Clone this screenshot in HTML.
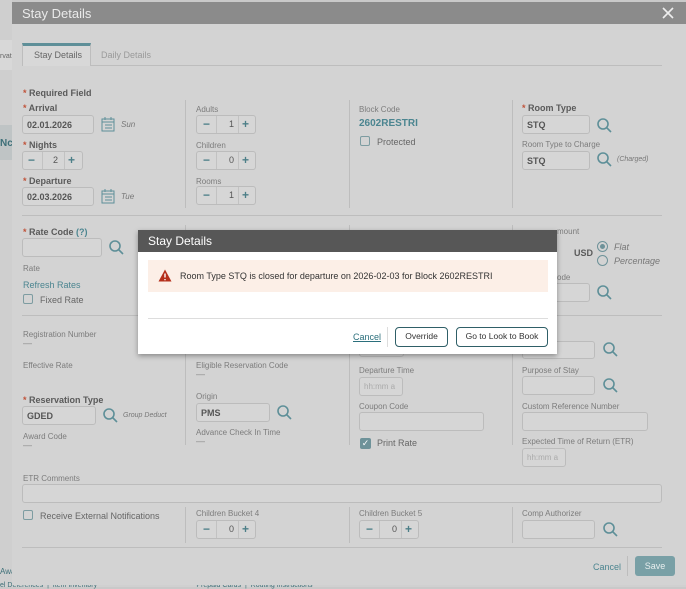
<!DOCTYPE html>
<html><head><meta charset="utf-8"><style>
*{margin:0;padding:0;box-sizing:border-box}
body{width:686px;height:587px;overflow:hidden;background:#c9c9c9;font-family:"Liberation Sans",sans-serif;position:relative;color:#555}
.a{position:absolute;white-space:nowrap}
.l{position:absolute;font-size:8px;color:#7c7c7c;white-space:nowrap}
.b{position:absolute;font-size:9px;color:#5a5a5a;font-weight:bold;white-space:nowrap}
.s{color:#c0533a}
.in{position:absolute;border:1px solid #bcbcbc;background:#d6d6d6;border-radius:3px;height:19px;font-size:9px;font-weight:bold;color:#555;padding:4px 4px}
.sp{position:absolute;height:19px;border:1px solid #bcbcbc;border-radius:3px;background:#d6d6d6;font-size:12px;color:#4d7f88}
.sp span{position:absolute;top:1px;font-weight:bold}
.sp i{position:absolute;top:0;width:1px;height:17px;background:#c2c2c2}
.sp b{position:absolute;top:3px;font-size:9px;color:#555;font-weight:normal}
.hl{position:absolute;height:1px;background:#bdbdbd}
.vl{position:absolute;width:1px;background:#bdbdbd}
.cb{position:absolute;width:10px;height:10px;border:1px solid #7d9ca1;border-radius:2px}
</style></head><body>
<div class="a" style="left:0;top:0;width:12px;height:587px;background:#cfcfcf"></div>
<div class="a" style="left:0;top:40px;width:12px;height:30px;background:#d8d8d8"></div>
<div class="a" style="left:0;top:53px;font-size:7px;color:#666">rvat</div>
<div class="a" style="left:0;top:125px;width:12px;height:35px;background:#bfc4c5"></div>
<div class="a" style="left:0;top:138px;font-size:10px;font-weight:bold;color:#3d6f78">Nc</div>
<div class="a" style="left:0;top:567px;font-size:8px;color:#3d6f78">Awa</div>
<div class="a" style="left:0;top:580px;width:686px;height:7px;background:#d0d0d0"></div>
<div class="a" style="left:0;top:582px;font-size:7px;color:#3d6f78">el Deferences &nbsp;|&nbsp; Item Inventory &nbsp; &nbsp; &nbsp; &nbsp; &nbsp; &nbsp; &nbsp; &nbsp; &nbsp; &nbsp; &nbsp; &nbsp; &nbsp; &nbsp; &nbsp; &nbsp; &nbsp; &nbsp; &nbsp; &nbsp; &nbsp; &nbsp; &nbsp; &nbsp; &nbsp; Prepaid Cards &nbsp;|&nbsp; Routing Instructions</div>
<div class="a" style="left:0;top:2px;width:686px;height:583px"></div>
<div class="a" style="left:12px;top:2px;width:674px;height:583px;background:#d3d3d3"></div>
<div class="a" style="left:12px;top:2px;width:674px;height:22px;background:#8b8b8b"></div>
<div class="a" style="left:22px;top:6px;font-size:13px;color:#eaeaea">Stay Details</div>
<svg class="a" style="left:662px;top:7px" width="12" height="12"><path d="M1 1L11 11M11 1L1 11" stroke="#eee" stroke-width="1.6"/></svg>
<div class="a" style="left:22px;top:43px;width:69px;height:23px;background:#d8d8d8;border-top:3px solid #5e8f98;border-right:1px solid #bdbdbd;border-left:1px solid #bdbdbd"></div>
<div class="a" style="left:34px;top:50px;font-size:9px;color:#666">Stay Details</div>
<div class="a" style="left:101px;top:50px;font-size:9px;color:#9a9a9a">Daily Details</div>
<div class="hl" style="left:91px;top:65px;width:571px"></div>
<div class="b" style="left:23px;top:88px"><span class="s">* </span>Required Field</div>
<div class="b" style="left:23px;top:103px"><span class="s">* </span>Arrival</div>
<div class="in" style="left:22px;top:115px;width:72px">02.01.2026</div>
<svg class="a" style="left:101px;top:117px" width="14" height="15"><rect x="1" y="2" width="12" height="12" fill="none" stroke="#5e8f98"/><path d="M1 5H13M4 8H11M4 11H11M4 0V3M10 0V3" stroke="#5e8f98"/></svg>
<div class="a" style="left:121px;top:120px;font-size:8px;font-style:italic;color:#777">Sun</div>
<div class="b" style="left:23px;top:140px"><span class="s">* </span>Nights</div>
<div class="sp" style="left:22px;top:151px;width:61px"><span style="left:5px">−</span><i style="left:19px"></i><b style="left:30px">2</b><i style="left:41px"></i><span style="left:45px">+</span></div>
<div class="b" style="left:23px;top:176px"><span class="s">* </span>Departure</div>
<div class="in" style="left:22px;top:187px;width:72px">02.03.2026</div>
<svg class="a" style="left:101px;top:189px" width="14" height="15"><rect x="1" y="2" width="12" height="12" fill="none" stroke="#5e8f98"/><path d="M1 5H13M4 8H11M4 11H11M4 0V3M10 0V3" stroke="#5e8f98"/></svg>
<div class="a" style="left:121px;top:192px;font-size:8px;font-style:italic;color:#777">Tue</div>
<div class="vl" style="left:185px;top:100px;height:108px"></div>
<div class="l" style="left:196px;top:105px">Adults</div>
<div class="sp" style="left:196px;top:115px;width:60px"><span style="left:6px">−</span><i style="left:19px"></i><b style="left:32px">1</b><i style="left:41px"></i><span style="left:45px">+</span></div>
<div class="l" style="left:196px;top:141px">Children</div>
<div class="sp" style="left:196px;top:151px;width:60px"><span style="left:6px">−</span><i style="left:19px"></i><b style="left:32px">0</b><i style="left:41px"></i><span style="left:45px">+</span></div>
<div class="l" style="left:196px;top:177px">Rooms</div>
<div class="sp" style="left:196px;top:186px;width:60px"><span style="left:6px">−</span><i style="left:19px"></i><b style="left:32px">1</b><i style="left:41px"></i><span style="left:45px">+</span></div>
<div class="vl" style="left:349px;top:100px;height:108px"></div>
<div class="l" style="left:359px;top:105px">Block Code</div>
<div class="a" style="left:359px;top:118px;font-size:10px;font-weight:bold;color:#4b8590">2602RESTRI</div>
<div class="cb" style="left:360px;top:136px"></div>
<div class="a" style="left:377px;top:137px;font-size:9px;color:#666">Protected</div>
<div class="vl" style="left:512px;top:100px;height:108px"></div>
<div class="b" style="left:522px;top:103px"><span class="s">* </span>Room Type</div>
<div class="in" style="left:522px;top:115px;width:68px">STQ</div>
<div class="l" style="left:522px;top:140px">Room Type to Charge</div>
<div class="in" style="left:522px;top:151px;width:68px">STQ</div>
<div class="a" style="left:617px;top:156px;font-size:7px;font-style:italic;color:#777">(Charged)</div>
<div class="hl" style="left:22px;top:215px;width:640px"></div>
<div class="b" style="left:23px;top:227px"><span class="s">* </span>Rate Code <span style="color:#4b8590">(?)</span></div>
<div class="in" style="left:22px;top:238px;width:80px"></div>
<div class="l" style="left:23px;top:264px">Rate</div>
<div class="a" style="left:23px;top:280px;font-size:9px;color:#4b8590">Refresh Rates</div>
<div class="cb" style="left:23px;top:294px"></div>
<div class="a" style="left:40px;top:295px;font-size:9px;color:#666">Fixed Rate</div>
<div class="vl" style="left:185px;top:225px;height:80px"></div>
<div class="vl" style="left:349px;top:225px;height:80px"></div>
<div class="vl" style="left:512px;top:225px;height:80px"></div>
<div class="l" style="left:557px;top:227px">mount</div>
<div class="b" style="left:574px;top:248px">USD</div>
<div class="a" style="left:597px;top:241px;width:11px;height:11px;border:1px solid #6e9299;border-radius:50%"><div style="position:absolute;left:2px;top:2px;width:5px;height:5px;border-radius:50%;background:#6e9299"></div></div>
<div class="a" style="left:597px;top:255px;width:11px;height:11px;border:1px solid #6e9299;border-radius:50%"></div>
<div class="a" style="left:614px;top:242px;font-size:9px;font-style:italic;color:#777">Flat</div>
<div class="a" style="left:614px;top:256px;font-size:9px;font-style:italic;color:#777">Percentage</div>
<div class="l" style="left:557px;top:273px">ode</div>
<div class="in" style="left:540px;top:283px;width:50px"></div>
<div class="hl" style="left:22px;top:315px;width:640px"></div>
<div class="l" style="left:23px;top:330px">Registration Number</div>
<div class="a" style="left:23px;top:338px;font-size:9px;color:#888">—</div>
<div class="l" style="left:23px;top:361px">Effective Rate</div>
<div class="b" style="left:23px;top:395px"><span class="s">* </span>Reservation Type</div>
<div class="in" style="left:22px;top:406px;width:74px">GDED</div>
<div class="a" style="left:123px;top:412px;font-size:7px;font-style:italic;color:#777">Group Deduct</div>
<div class="l" style="left:23px;top:432px">Award Code</div>
<div class="a" style="left:23px;top:440px;font-size:9px;color:#888">—</div>
<div class="vl" style="left:185px;top:325px;height:120px"></div>
<div class="l" style="left:196px;top:361px">Eligible Reservation Code</div>
<div class="a" style="left:196px;top:369px;font-size:9px;color:#888">—</div>
<div class="l" style="left:196px;top:392px">Origin</div>
<div class="in" style="left:196px;top:403px;width:74px">PMS</div>
<div class="l" style="left:196px;top:428px">Advance Check In Time</div>
<div class="a" style="left:196px;top:436px;font-size:9px;color:#888">—</div>
<div class="vl" style="left:349px;top:325px;height:120px"></div>
<div class="in" style="left:359px;top:341px;width:45px;height:16px"></div>
<div class="l" style="left:359px;top:366px">Departure Time</div>
<div class="in" style="left:359px;top:377px;width:44px;font-weight:normal;color:#aaa;font-size:8px">hh:mm a</div>
<div class="l" style="left:359px;top:402px">Coupon Code</div>
<div class="in" style="left:359px;top:412px;width:125px"></div>
<div class="a" style="left:360px;top:438px;width:11px;height:11px;background:#6e9299;border-radius:2px;color:#fff;font-size:9px;line-height:11px;text-align:center">✓</div>
<div class="a" style="left:377px;top:438px;font-size:9px;color:#666">Print Rate</div>
<div class="vl" style="left:512px;top:325px;height:120px"></div>
<div class="in" style="left:522px;top:341px;width:73px;height:18px"></div>
<div class="l" style="left:522px;top:366px">Purpose of Stay</div>
<div class="in" style="left:522px;top:376px;width:73px"></div>
<div class="l" style="left:522px;top:402px">Custom Reference Number</div>
<div class="in" style="left:522px;top:412px;width:126px"></div>
<div class="l" style="left:522px;top:437px">Expected Time of Return (ETR)</div>
<div class="in" style="left:522px;top:448px;width:44px;font-weight:normal;color:#aaa;font-size:8px">hh:mm a</div>
<div class="l" style="left:23px;top:474px">ETR Comments</div>
<div class="in" style="left:22px;top:484px;width:640px"></div>
<div class="cb" style="left:23px;top:510px"></div>
<div class="a" style="left:40px;top:511px;font-size:9px;color:#666">Receive External Notifications</div>
<div class="vl" style="left:185px;top:507px;height:36px"></div>
<div class="l" style="left:196px;top:509px">Children Bucket 4</div>
<div class="sp" style="left:196px;top:520px;width:60px"><span style="left:6px">−</span><i style="left:19px"></i><b style="left:32px">0</b><i style="left:41px"></i><span style="left:45px">+</span></div>
<div class="vl" style="left:349px;top:507px;height:36px"></div>
<div class="l" style="left:359px;top:509px">Children Bucket 5</div>
<div class="sp" style="left:359px;top:520px;width:60px"><span style="left:6px">−</span><i style="left:19px"></i><b style="left:32px">0</b><i style="left:41px"></i><span style="left:45px">+</span></div>
<div class="vl" style="left:512px;top:507px;height:36px"></div>
<div class="l" style="left:522px;top:509px">Comp Authorizer</div>
<div class="in" style="left:522px;top:520px;width:73px"></div>
<div class="hl" style="left:22px;top:547px;width:640px"></div>
<div class="a" style="left:593px;top:562px;font-size:9px;color:#4b8590">Cancel</div>
<div class="vl" style="left:627px;top:556px;height:20px"></div>
<div class="a" style="left:635px;top:556px;width:40px;height:20px;background:#79a0a6;border-radius:3px;color:#e8eeee;font-size:9px;text-align:center;line-height:20px">Save</div>
<svg width="686" height="587" class="a" style="left:0;top:0">
<g fill="none" stroke="#5e8f98" stroke-width="1.6">
<circle cx="603" cy="124" r="5"/><path d="M607 128L611 132"/>
<circle cx="603" cy="158" r="5"/><path d="M607 162L611 166"/>
<circle cx="115" cy="246" r="5"/><path d="M119 250L123 254"/>
<circle cx="603" cy="291" r="5"/><path d="M607 295L611 299"/>
<circle cx="609" cy="348" r="5"/><path d="M613 352L617 356"/>
<circle cx="609" cy="384" r="5"/><path d="M613 388L617 392"/>
<circle cx="109" cy="414" r="5"/><path d="M113 418L117 422"/>
<circle cx="283" cy="411" r="5"/><path d="M287 415L291 419"/>
<circle cx="609" cy="528" r="5"/><path d="M613 532L617 536"/>
</g></svg>
<div class="a" style="left:138px;top:230px;width:419px;height:124px;background:#fff;box-shadow:0 2px 5px rgba(0,0,0,.35)"></div>
<div class="a" style="left:138px;top:230px;width:419px;height:22px;background:#575757"></div>
<div class="a" style="left:148px;top:234px;font-size:12px;color:#fff">Stay Details</div>
<div class="a" style="left:148px;top:260px;width:400px;height:32px;background:#fcefe7"></div>
<svg class="a" style="left:158px;top:269px" width="14" height="13"><path d="M7 0.5L13.5 12.5H0.5Z" fill="#b5301c"/><path d="M7 4.5V8.5M7 10V11.3" stroke="#fff" stroke-width="1.4"/></svg>
<div class="a" style="left:180px;top:271px;font-size:9px;color:#333">Room Type STQ is closed for departure on 2026-02-03 for Block 2602RESTRI</div>
<div class="hl" style="left:148px;top:318px;width:400px;background:#ddd"></div>
<div class="a" style="left:353px;top:332px;font-size:9px;color:#2b6f7c;text-decoration:underline">Cancel</div>
<div class="vl" style="left:387px;top:327px;height:20px;background:#ddd"></div>
<div class="a" style="left:395px;top:327px;width:53px;height:20px;border:1.5px solid #2f5f67;border-radius:4px;font-size:8.5px;color:#333;text-align:center;line-height:17px">Override</div>
<div class="a" style="left:456px;top:327px;width:92px;height:20px;border:1.5px solid #2f5f67;border-radius:4px;font-size:8.5px;color:#333;text-align:center;line-height:17px">Go to Look to Book</div>
</body></html>
